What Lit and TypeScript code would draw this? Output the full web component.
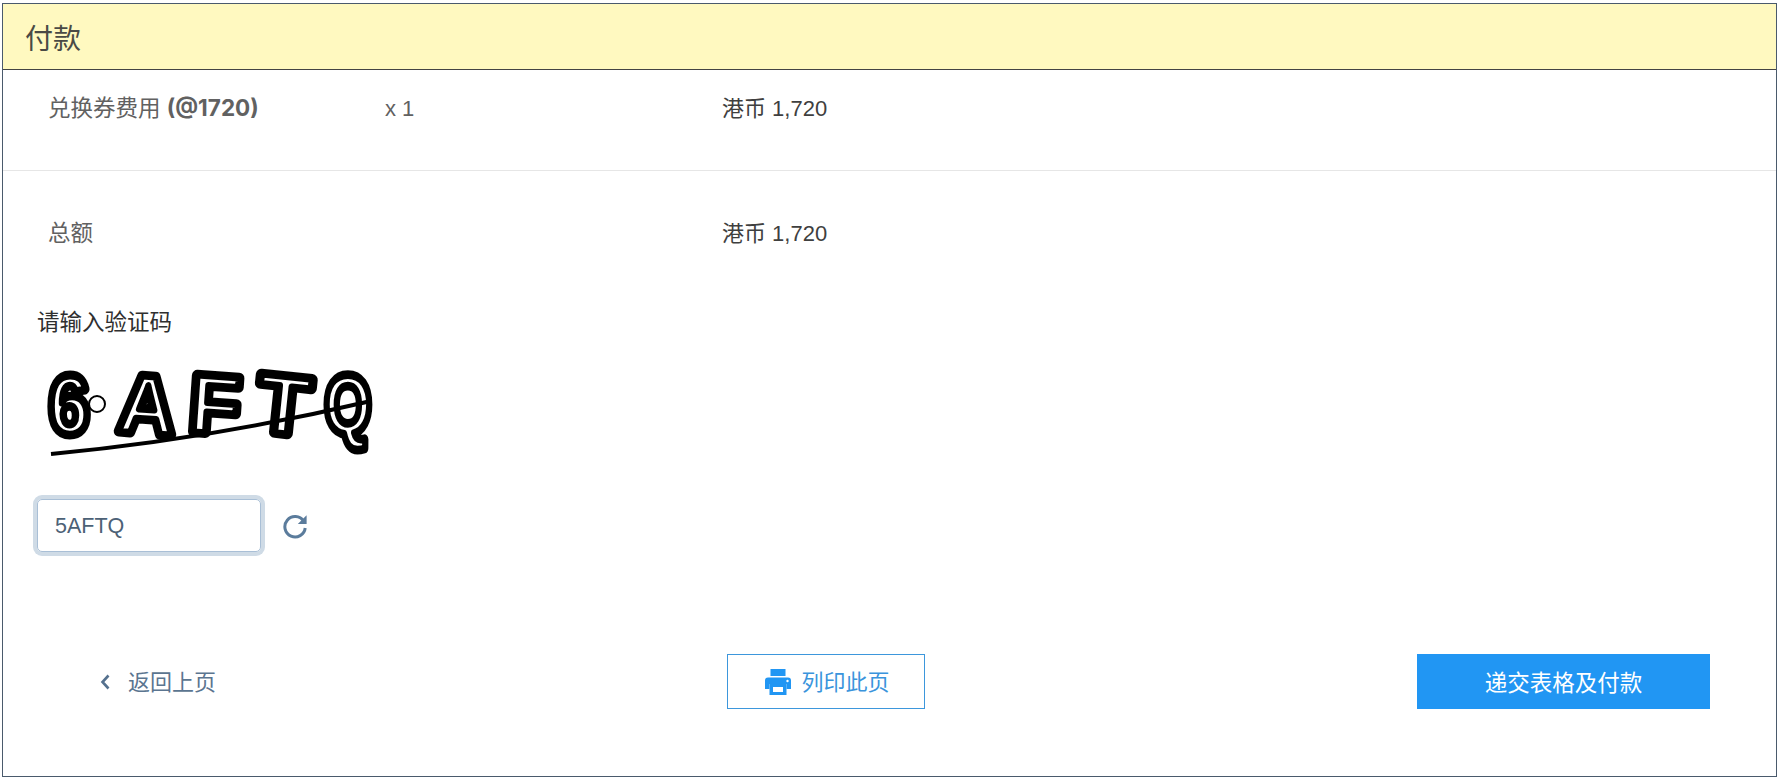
import { LitElement, html, css, svg } from 'lit';
import { customElement } from 'lit/decorators.js';

@customElement('app-root')
export class AppRoot extends LitElement {
  static styles = css`
    :host {
      display: block;
      height: 778px;
      box-sizing: border-box;
      padding: 3px 1px 1px 2px;
      background: #fff;
      font-family: 'Liberation Sans', 'Noto Sans CJK SC', sans-serif;
      font-size: 22px;
      color: #4a4a4a;
    }
    .panel {
      height: 100%;
      box-sizing: border-box;
      border: 1px solid #4a5a6c;
    }
    .title {
      height: 66px;
      box-sizing: border-box;
      display: flex;
      align-items: center;
      padding-left: 22px;
      background: #fff9c0;
      border-bottom: 1px solid #444;
      font-size: 28px;
      color: #4a4a45;
    }
    .row {
      display: grid;
      grid-template-columns: 337px 337px 1fr;
      padding-left: 45px;
      align-items: center;
      line-height: 32px;
    }
    .fee {
      height: 101px;
      padding-bottom: 23px;
      box-sizing: border-box;
      border-bottom: 1px solid #e6e6e6;
    }
    .total {
      height: 104px;
      padding-top: 21px;
      box-sizing: border-box;
    }
    .muted {
      color: #616161;
      font-size: 22.5px;
    }
    .count {
      color: #616161;
    }
    .muted b {
      font-family: 'Inter', 'Liberation Sans', sans-serif;
      font-size: 22.5px;
    }
    .value {
      color: #3f3f3f;
    }
    .captcha {
      padding: 32px 0 0 34px;
    }
    .captcha-label {
      color: #2f2f2f;
      font-size: 22.5px;
      line-height: 32px;
    }
    .captcha-image {
      display: block;
      margin: 16px 0 0 6px;
      width: 340px;
      height: 110px;
    }
    .captcha-input {
      display: flex;
      align-items: center;
      gap: 21px;
      margin-top: 34px;
    }
    .field {
      width: 224px;
      height: 53px;
      box-sizing: border-box;
      border: 1px solid #a9bfd6;
      border-radius: 5px;
      box-shadow: 0 0 0 4px #cfdbe6;
      padding: 2px 17px 0;
      display: flex;
      align-items: center;
      color: #4c6176;
      font-size: 21.5px;
    }
    .refresh {
      width: 26px;
      height: 26px;
      display: block;
    }
    .actions {
      display: grid;
      grid-template-columns: 628px 198px 1fr;
      align-items: center;
      margin-top: 102px;
      padding: 0 66px 0 96px;
    }
    .back {
      display: flex;
      align-items: center;
      gap: 17px;
      color: #5b7590;
      padding-bottom: 4px;
    }
    .chevron {
      width: 12px;
      height: 18px;
      display: block;
      margin-top: 4px;
    }
    .print {
      height: 55px;
      box-sizing: border-box;
      border: 1px solid #3d97dc;
      color: #3a94dc;
      display: flex;
      align-items: center;
      justify-content: center;
      gap: 10px;
      padding: 0 0 3px 3px;
    }
    .print svg {
      width: 26px;
      height: 26px;
      display: block;
      margin-top: 3px;
    }
    .submit {
      justify-self: end;
      width: 293px;
      height: 55px;
      box-sizing: border-box;
      display: flex;
      align-items: center;
      justify-content: center;
      padding-bottom: 2px;
      background: #2196f3;
      color: #fff;
      font-size: 22.5px;
    }
    .cap-text {
      font-family: 'Liberation Sans', sans-serif;
      font-weight: 700;
      font-size: 82px;
      stroke: #000;
      stroke-linejoin: round;
      text-anchor: middle;
    }
    .cap-outer {
      stroke-width: 11px;
    }
    .cap-inner {
      fill: #fff;
      stroke-width: 6.5px;
    }
  `;

  render() {
    return html`
      <div class="panel">
        <div class="title">付款</div>
        <div class="row fee">
          <div class="muted">兑换券费用 <b>(@1720)</b></div>
          <div class="count">x 1</div>
          <div class="value">港币 1,720</div>
        </div>
        <div class="row total">
          <div class="muted">总额</div>
          <div></div>
          <div class="value">港币 1,720</div>
        </div>
        <div class="captcha">
          <div class="captcha-label">请输入验证码</div>
          ${this.renderCaptcha()}
          <div class="captcha-input">
            <div class="field">5AFTQ</div>
            <svg class="refresh" viewBox="0 0 26 26" fill="none">
              <path d="M21.6 8.2A10.2 10.2 0 1 0 23.2 15" stroke="#5b7c9c" stroke-width="3"></path>
              <path d="M24.6 2.2V11h-8.8z" fill="#5b7c9c"></path>
            </svg>
          </div>
        </div>
        <div class="actions">
          <div class="back">
            <svg class="chevron" viewBox="0 0 12 18" fill="none">
              <path d="M9.5 2.5 3.5 9l6 6.5" stroke="#55718e" stroke-width="2.6"></path>
            </svg>
            返回上页
          </div>
          <div class="print">
            <svg viewBox="0 0 26 26">
              <path fill="#2196f3" d="M5.500 0h15v7h-15zM3 8.500h20a3 3 0 0 1 3 3V20h-4.500v-5h-17v5H0v-8.500a3 3 0 0 1 3-3z"></path>
              <path fill="#2196f3" fill-rule="evenodd" d="M4.500 15h17v11h-17zM8 18v5h10v-5z"></path>
              <circle cx="22.500" cy="12" r="1.200" fill="#fff"></circle>
            </svg>
            列印此页
          </div>
          <div class="submit">递交表格及付款</div>
        </div>
      </div>
    `;
  }

  renderCaptcha() {
    // cx is each letter's centre in the picture, sx squeezes it to the width it has there
    const letters = [
      { c: '6', cx: 26, r: 0, sx: 0.86 },
      { c: 'A', cx: 102, r: 4, sx: 0.95 },
      { c: 'F', cx: 170, r: 4, sx: 1 },
      { c: 'T', cx: 238, r: 6, sx: 1.05 },
      { c: 'Q', cx: 305, r: 0, sx: 0.72 },
    ];
    return html`
      <svg class="captcha-image" viewBox="0 0 340 110">
        <defs>
          <filter id="soft"><feGaussianBlur stdDeviation="0.7"></feGaussianBlur></filter>
        </defs>
        <g filter="url(#soft)">
          <circle cx="54" cy="49" r="8" fill="#fff" stroke="#000" stroke-width="2"></circle>
          ${letters.map(
            (l) => svg`<g transform="translate(${l.cx} 78) rotate(${l.r}) scale(${l.sx} 1)">
              <text class="cap-text cap-outer">${l.c}</text>
              <text class="cap-text cap-inner">${l.c}</text>
            </g>`,
          )}
          <path d="M8 99Q168 84 328 46" fill="none" stroke="#000" stroke-width="4"></path>
        </g>
      </svg>
    `;
  }
}
